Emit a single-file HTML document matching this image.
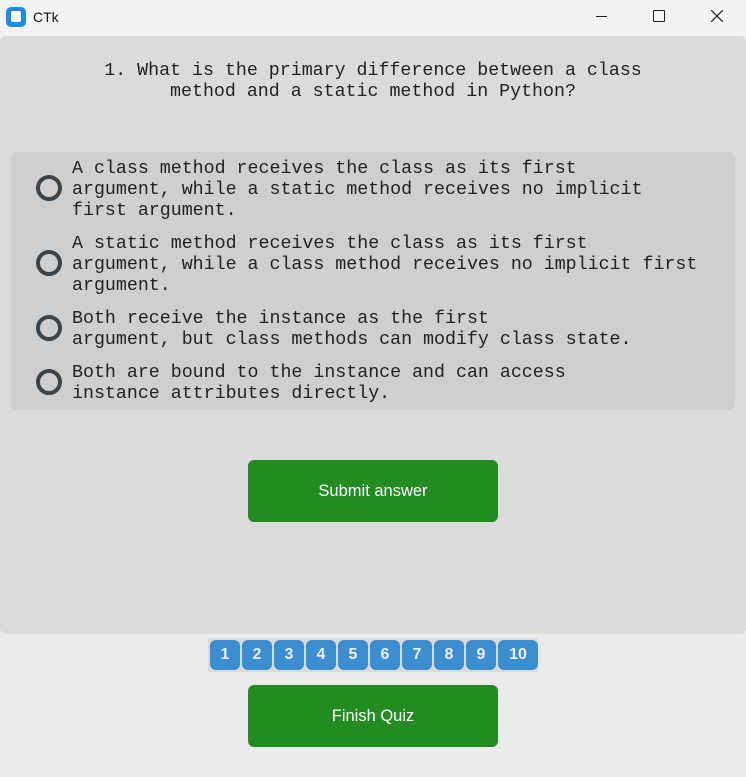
<!DOCTYPE html>
<html><head><style>
body{margin:0;width:746px;height:777px;background:#ebebeb;position:relative;overflow:hidden;font-family:"Liberation Sans",sans-serif}
.tb{position:absolute;left:0;top:0;width:746px;height:36px;background:#f3f3f3}
.main{position:absolute;left:0;top:36px;width:746px;height:598px;background:#dbdbdb;border-radius:6px}
.mono{font-family:"Liberation Mono",monospace;font-size:18.3px;color:#222;line-height:21px;white-space:pre}
.q{position:absolute;top:61px;left:0;width:746px;text-align:center}
.opts{position:absolute;left:11px;top:152px;width:724px;height:258px;background:#cfcfcf;border-radius:6px}
.r{position:absolute;left:36px;width:18px;height:18px;border:4px solid #3e4348;border-radius:50%}
.t{position:absolute;left:72px}
.btn{position:absolute;left:248px;width:250px;height:62px;background:#228b22;border-radius:6px;color:#fff;font-size:16.5px;text-align:center;line-height:62px}
.nums{position:absolute;left:208px;top:638px;width:330px;height:34px;background:#dbdbdb;display:flex;gap:2px;padding:2px 0 0 2px;box-sizing:border-box}
.nums div{width:30px;height:30px;background:#3b8ed0;border-radius:6px;color:#eef;font-weight:bold;font-size:16px;text-align:center;line-height:30px}
</style></head><body>
<div class="tb">
<div style="position:absolute;left:6px;top:7px;width:20px;height:20px;background:#1a8cf0;border-radius:5px"><div style="position:absolute;left:5px;top:4px;width:10px;height:11px;background:#fff;border-radius:2px"></div></div>
<div style="position:absolute;left:33px;top:9px;font-family:'Liberation Sans';font-size:14px;color:#111">CTk</div>
<div style="position:absolute;left:596px;top:16px;width:11px;height:1px;background:#222"></div>
<div style="position:absolute;left:653px;top:10px;width:10px;height:10px;border:1px solid #222;border-radius:1px"></div>
<svg style="position:absolute;left:711px;top:10px" width="12" height="12"><path d="M0 0L12 12M12 0L0 12" stroke="#222" stroke-width="1.2"/></svg>
</div>
<div class="main"></div>
<div class="q mono">1. What is the primary difference between a class
method and a static method in Python?</div>
<div class="opts"></div>
<div class="r" style="top:175px"></div>
<div class="t mono" style="top:159px">A class method receives the class as its first
argument, while a static method receives no implicit
first argument.</div>
<div class="r" style="top:250px"></div>
<div class="t mono" style="top:234px">A static method receives the class as its first
argument, while a class method receives no implicit first
argument.</div>
<div class="r" style="top:315px"></div>
<div class="t mono" style="top:309px">Both receive the instance as the first
argument, but class methods can modify class state.</div>
<div class="r" style="top:369px"></div>
<div class="t mono" style="top:363px">Both are bound to the instance and can access
instance attributes directly.</div>
<div class="btn" style="top:460px">Submit answer</div>
<div class="nums"><div>1</div><div>2</div><div>3</div><div>4</div><div>5</div><div>6</div><div>7</div><div>8</div><div>9</div><div style="width:40px">10</div></div>
<div class="btn" style="top:685px">Finish Quiz</div>
</body></html>
